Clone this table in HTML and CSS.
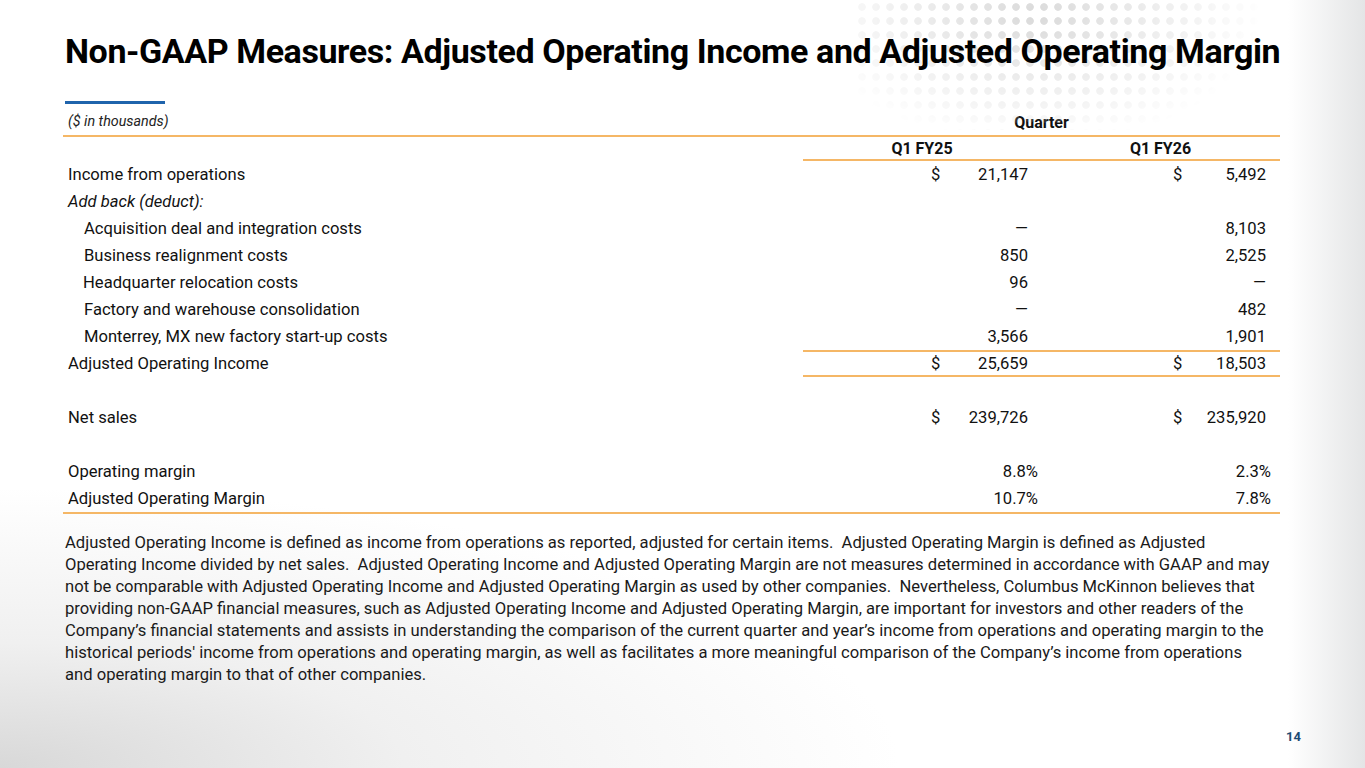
FILE: index.html
```html
<!DOCTYPE html>
<html lang="en">
<head>
<meta charset="utf-8">
<title>Non-GAAP Measures</title>
<link rel="stylesheet" href="styles.css">
</head>
<body>
<div class="slide">
  <div class="dots"></div>
  <h1 class="title">Non-GAAP Measures: Adjusted Operating Income and Adjusted Operating Margin</h1>
  <div class="rule"></div>
  <div class="table">
    <div class="row head1">
      <div class="label units">($ in thousands)</div>
      <div class="quarter">Quarter</div>
    </div>
    <div class="row head2">
      <div class="label"></div>
      <div class="col c1 h">Q1 FY25</div>
      <div class="col c2 h">Q1 FY26</div>
    </div>
    <div class="row">
      <div class="label">Income from operations</div>
      <div class="col c1 money"><span>$</span><span>21,147</span></div>
      <div class="col c2 money"><span>$</span><span>5,492</span></div>
    </div>
    <div class="row">
      <div class="label it">Add back (deduct):</div>
      <div class="col c1"></div>
      <div class="col c2"></div>
    </div>
    <div class="row">
      <div class="label ind">Acquisition deal and integration costs</div>
      <div class="col c1 num">—</div>
      <div class="col c2 num">8,103</div>
    </div>
    <div class="row">
      <div class="label ind">Business realignment costs</div>
      <div class="col c1 num">850</div>
      <div class="col c2 num">2,525</div>
    </div>
    <div class="row">
      <div class="label ind hq">Headquarter relocation costs</div>
      <div class="col c1 num">96</div>
      <div class="col c2 num">—</div>
    </div>
    <div class="row">
      <div class="label ind">Factory and warehouse consolidation</div>
      <div class="col c1 num">—</div>
      <div class="col c2 num">482</div>
    </div>
    <div class="row">
      <div class="label ind">Monterrey, MX new factory start-up costs</div>
      <div class="col c1 num">3,566</div>
      <div class="col c2 num">1,901</div>
    </div>
    <div class="row total">
      <div class="label">Adjusted Operating Income</div>
      <div class="col c1 money"><span>$</span><span>25,659</span></div>
      <div class="col c2 money"><span>$</span><span>18,503</span></div>
    </div>
    <div class="row blank"></div>
    <div class="row">
      <div class="label">Net sales</div>
      <div class="col c1 money"><span>$</span><span>239,726</span></div>
      <div class="col c2 money"><span>$</span><span>235,920</span></div>
    </div>
    <div class="row blank"></div>
    <div class="row">
      <div class="label">Operating margin</div>
      <div class="col c1 pct">8.8%</div>
      <div class="col c2 pct">2.3%</div>
    </div>
    <div class="row last">
      <div class="label">Adjusted Operating Margin</div>
      <div class="col c1 pct">10.7%</div>
      <div class="col c2 pct">7.8%</div>
    </div>
  </div>
  <p class="note">Adjusted Operating Income is defined as income from operations as reported, adjusted for certain items.&nbsp; Adjusted Operating Margin is defined as Adjusted<br>Operating Income divided by net sales.&nbsp; Adjusted Operating Income and Adjusted Operating Margin are not measures determined in accordance with GAAP and may<br>not be comparable with Adjusted Operating Income and Adjusted Operating Margin as used by other companies.&nbsp; Nevertheless, Columbus McKinnon believes that<br>providing non-GAAP financial measures, such as Adjusted Operating Income and Adjusted Operating Margin, are important for investors and other readers of the<br>Company’s financial statements and assists in understanding the comparison of the current quarter and year’s income from operations and operating margin to the<br>historical periods' income from operations and operating margin, as well as facilitates a more meaningful comparison of the Company’s income from operations<br>and operating margin to that of other companies.</p>
  <div class="pageno">14</div>
</div>
</body>
</html>
```

FILE: styles.css
```css
html, body {
  margin: 0;
  padding: 0;
}
body {
  font-family: Roboto, "Liberation Sans", Arial, sans-serif;
  color: #111;
}
.slide {
  position: relative;
  width: 1365px;
  height: 768px;
  overflow: hidden;
  box-sizing: border-box;
  padding: 31px 0 0 65px;
  background:
    linear-gradient(to right, rgba(228,229,230,0) 0, rgba(228,229,230,0) 1288px, #e4e5e6 1365px),
    radial-gradient(ellipse 900px 280px at 0% 100%, #d8d8d8 0%, rgba(230,230,230,0.6) 45%, rgba(255,255,255,0) 100%),
    #ffffff;
}
.dots {
  position: absolute;
  left: 855px;
  top: 0;
  width: 420px;
  height: 130px;
  background-image: radial-gradient(circle at 7px 7px, #d6d6d6 0, #d6d6d6 3.4px, rgba(214,214,214,0) 4.2px);
  background-size: 14px 14px;
  -webkit-mask-image: radial-gradient(ellipse 230px 130px at 180px 15px, rgba(0,0,0,0.9) 0%, rgba(0,0,0,0.45) 50%, rgba(0,0,0,0) 100%);
  mask-image: radial-gradient(ellipse 230px 130px at 180px 15px, rgba(0,0,0,0.9) 0%, rgba(0,0,0,0.45) 50%, rgba(0,0,0,0) 100%);
  z-index: 0;
}
.title {
  position: relative;
  z-index: 1;
  margin: 0;
  font-size: 34px;
  line-height: 40px;
  font-weight: 700;
  color: #000;
  letter-spacing: -0.4px;
  white-space: nowrap;
}
.rule {
  width: 100px;
  height: 3px;
  background: #1f64ac;
  margin-top: 30px;
}
.table {
  width: 1217px;
  margin-left: -2px;
  margin-top: 8px;
  font-size: 16.6px;
}
.row {
  display: grid;
  grid-template-columns: 740px 238px 239px;
  height: 27px;
  align-items: center;
}
.row.head1 {
  height: 23px;
  border-bottom: 2px solid #f5b766;
  grid-template-columns: 740px 477px;
  align-items: start;
}
.units {
  font-style: italic;
  font-size: 14.3px;
  padding-left: 9px;
  line-height: 18px;
  color: #222;
}
.quarter {
  text-align: center;
  font-weight: 700;
  font-size: 16px;
  line-height: 18px;
  padding-top: 2px;
}
.row.head2 {
  height: 24px;
}
.row.head2 .col {
  border-bottom: 2px solid #f5b766;
  height: 24px;
  line-height: 23px;
  font-size: 16px;
}
.h {
  font-weight: 700;
  text-align: center;
}
.label {
  padding-left: 5px;
  white-space: nowrap;
}
.label.ind {
  padding-left: 21px;
}
.label.hq {
  padding-left: 20px;
}
.it {
  font-style: italic;
}
.col {
  height: 27px;
  line-height: 27px;
  box-sizing: border-box;
}
.money {
  display: flex;
  justify-content: space-between;
}
.c1.money { padding: 0 13px 0 128px; }
.c2.money { padding: 0 14px 0 132px; }
.num { text-align: right; }
.c1.num { padding-right: 13px; }
.c2.num { padding-right: 14px; }
.pct { text-align: right; }
.c1.pct { padding-right: 3px; }
.c2.pct { padding-right: 9px; }
.row.total .col {
  border-top: 2px solid #f5b766;
  border-bottom: 2px solid #f5b766;
  height: 27px;
  line-height: 23px;
}
.row.last {
  border-bottom: 2px solid #f5b766;
}
.note {
  margin: 18px 0 0 0;
  font-size: 16.6px;
  line-height: 22px;
  color: #1a1a1a;
  white-space: nowrap;
}
.pageno {
  position: absolute;
  left: 1286px;
  top: 729px;
  font-size: 13px;
  font-weight: 700;
  color: #1e4a74;
}
```
